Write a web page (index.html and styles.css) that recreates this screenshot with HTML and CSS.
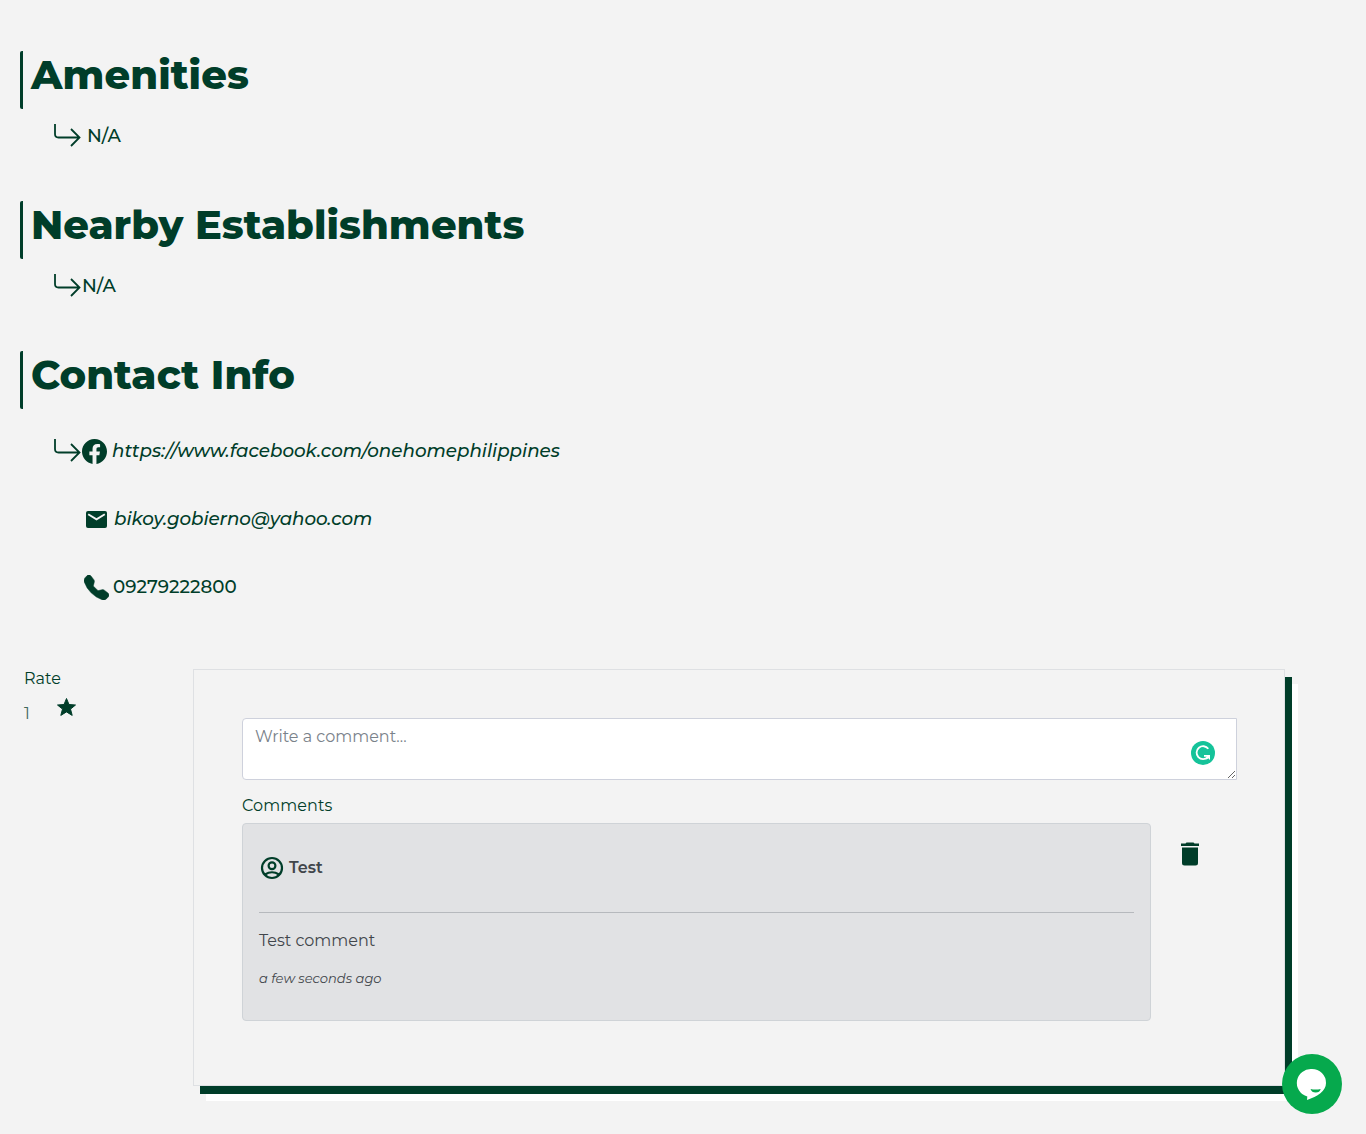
FILE: index.html
```html
<!DOCTYPE html>
<html lang="en">
<head>
<meta charset="utf-8">
<title>Property details</title>
<link rel="stylesheet" href="styles.css">
</head>
<body>
<svg class="symbols" aria-hidden="true">
  <symbol id="arrow" viewBox="0 0 28 24"><path d="M1 0v10q0 3.500 3.500 3.500H25.500M17 5l8.500 8.500-8.500 8.500" fill="none" stroke="currentColor" stroke-width="1.800"/></symbol>
</svg>
<main class="page">
  <section class="section">
    <h1 class="title">Amenities</h1>
    <div class="line spaced"><svg class="arrow"><use href="#arrow"/></svg><span class="na">N/A</span></div>
  </section>
  <section class="section">
    <h1 class="title">Nearby Establishments</h1>
    <div class="line"><svg class="arrow"><use href="#arrow"/></svg><span class="na">N/A</span></div>
  </section>
  <section class="section contact">
    <h1 class="title">Contact Info</h1>
    <div class="line link">
      <svg class="arrow"><use href="#arrow"/></svg>
      <svg class="facebook" viewBox="0 0 16 16"><path fill="currentColor" d="M16 8.049c0-4.446-3.582-8.050-8-8.050C3.580 0-.002 3.603-.002 8.050c0 4.017 2.926 7.347 6.750 7.951v-5.625h-2.030V8.050H6.750V6.275c0-2.017 1.195-3.131 3.022-3.131.876 0 1.791.157 1.791.157v1.980h-1.009c-.993 0-1.303.621-1.303 1.258v1.510h2.218l-.354 2.326H9.250V16c3.824-.604 6.750-3.934 6.750-7.951z"/></svg>
      <em class="url">https://www.facebook.com/onehomephilippines</em>
    </div>
    <div class="line sub">
      <svg class="mail" viewBox="0 0 21 17"><rect width="21" height="17" rx="2" fill="currentColor"/><path d="M2.200 3.200l8.300 5.200 8.300-5.200" fill="none" stroke="#f2f2f2" stroke-width="1.900"/></svg>
      <em class="email">bikoy.gobierno@yahoo.com</em>
    </div>
    <div class="line sub">
      <svg class="phone" viewBox="0 0 16 16"><path fill="currentColor" stroke="currentColor" stroke-width=".3" d="M1.885.511a1.745 1.745 0 0 1 2.610.163L6.290 2.980c.329.423.445.974.315 1.494l-.547 2.190a.678.678 0 0 0 .178.643l2.457 2.457a.678.678 0 0 0 .644.178l2.189-.547a1.745 1.745 0 0 1 1.494.315l2.306 1.794c.829.645.905 1.870.163 2.611l-1.034 1.034c-.740.740-1.846 1.065-2.877.702a18.634 18.634 0 0 1-7.010-4.420 18.634 18.634 0 0 1-4.420-7.009c-.362-1.030-.037-2.137.703-2.877L1.885.511z"/></svg>
      <span class="number">09279222800</span>
    </div>
  </section>
  <div class="feedback">
    <aside class="rating">
      <div class="label">Rate</div>
      <div class="score"><span class="one">1</span><svg class="star" viewBox="0 0 20 20"><path d="M10 1.500l2.500 6 6.500.5-5 4.100 1.700 6.300-5.700-3.500-5.700 3.500L6 12.100 1 8l6.500-.5z" fill="currentColor" stroke="currentColor" stroke-linejoin="round"/></svg></div>
    </aside>
    <section class="panel">
      <div class="editor">
        <textarea class="input" placeholder="Write a comment..."></textarea>
        <svg class="grammar" viewBox="0 0 24 24"><circle cx="12" cy="12" r="12" fill="#15c39a"/><path d="M17.300 7.800A6.500 6.500 0 1 0 16.800 16.200" fill="none" stroke="#fff" stroke-width="1.800"/><path d="M13 14h6v5l-1.800-1.700-1.500 1.200-1.200-1.200 1.300-1.500H13z" fill="#fff"/></svg>
      </div>
      <div class="label heading">Comments</div>
      <div class="thread">
        <article class="comment">
          <header class="author">
            <svg class="user" viewBox="0 0 26 26" fill="none" stroke="currentColor" stroke-width="2.200"><circle cx="13" cy="13" r="10"/><circle cx="13" cy="10.800" r="3.400"/><path d="M6 19.500q7-4.500 14 0"/></svg>
            <strong class="name">Test</strong>
          </header>
          <p class="body">Test comment</p>
          <p class="time"><em class="ago">a few seconds ago</em></p>
        </article>
        <svg class="trash" viewBox="0 0 18 24"><path fill="currentColor" d="M5.500.5h7l1 1H18V4H0V1.500h4.500zM1 5.500h16V21q0 2.500-2.500 2.500h-11Q1 23.500 1 21z"/></svg>
      </div>
    </section>
  </div>
</main>
<button class="chat" aria-label="Chat"><svg viewBox="0 0 60 60"><circle cx="30" cy="30" r="30" fill="#06a94d"/><path fill="#fff" d="M30 15a14 14 0 0 1 14 14c0 8-8.500 13.500-19 17l.3-3.500A14 14 0 0 1 30 15z"/><path d="M28.500 35q5 1.200 10.200 0-.9 3.500-5 3.500-4 0-5.200-3.500z" fill="#06a94d"/></svg></button>
</body>
</html>
```
FILE: styles.css
```css
* { box-sizing: border-box; }
body { margin: 0; background: #f3f3f3; color: #003d29; font-family: Montserrat, Inter, sans-serif; font-size: 16px; line-height: 24px; }
svg { display: block; flex: none; }
.symbols { display: none; }
.page { padding: 51px 20px 0; height: 1134px; }
.section { height: 150px; }
.contact { height: 318px; }
.title { margin: 0; height: 58px; border-left: 3px solid; border-radius: 2px; padding-left: 8px; font-size: 40px; line-height: 48px; font-weight: 800; letter-spacing: 0.03px; white-space: nowrap; }
.line { display: flex; align-items: center; height: 30px; margin-top: 11px; padding-left: 34px; font-size: 18.280px; font-weight: 500; white-space: nowrap; }
.line span, .line em { padding-top: 2px; }
.arrow { width: 28px; height: 24px; margin-top: 2px; }
.spaced .na { margin-left: 5px; }
.link { margin-top: 26px; }
.facebook { width: 25px; height: 25px; margin: 2px 5px 0 0; }
.sub { margin-top: 38px; padding-left: 64px; }
.email { letter-spacing: -0.04px; }
.mail { width: 21px; height: 17px; margin: 2px 7px 0 2px; }
.phone { width: 25px; height: 25px; margin: 2px 4px 0 0; }
.feedback { display: grid; grid-template-columns: 173px 1092px; }
.rating { padding-left: 4px; margin-top: -2px; }
.label { letter-spacing: 0.08px; }
.score { display: flex; padding-top: 10px; }
.one { width: 32px; padding-top: 1px; color: #40685c; }
.star { width: 21px; height: 20px; margin-top: -4px; }
.panel { height: 417px; border: 1px solid #dee0e3; padding: 48px; box-shadow: 7px 8px #003d29, 13px 15px #fff; }
.editor { position: relative; height: 62px; }
.input { display: block; width: 995px; height: 62px; border: 1px solid #ced1dc; border-radius: 4px 0 0 4px; padding: 6px 12px; background: #fff; font: 16px/24px Montserrat, Inter, sans-serif; resize: both; }
.input::placeholder { color: #7a828a; }
.grammar { position: absolute; left: 949px; top: 23px; width: 24px; height: 24px; }
.heading { margin: 14px 0 5px; }
.thread { display: flex; }
.comment { width: 909px; height: 198px; border: 1px solid #cfd3d7; border-radius: 4px; padding: 0 16px; background: #e1e2e4; color: #41464b; }
.author { display: flex; align-items: center; height: 89px; border-bottom: 1px solid #b6b9bd; }
.user { width: 26px; height: 26px; margin-right: 4px; color: #003d29; }
.name { font-weight: 600; }
.body { margin: 16px 0 0; }
.time { margin: 13px 0 0; font-size: 13.080px; }
.trash { width: 18px; height: 24px; margin: 19px 0 0 30px; }
.chat { position: absolute; left: 1282px; top: 1054px; width: 60px; height: 60px; padding: 0; border: 0; background: none; }
```
